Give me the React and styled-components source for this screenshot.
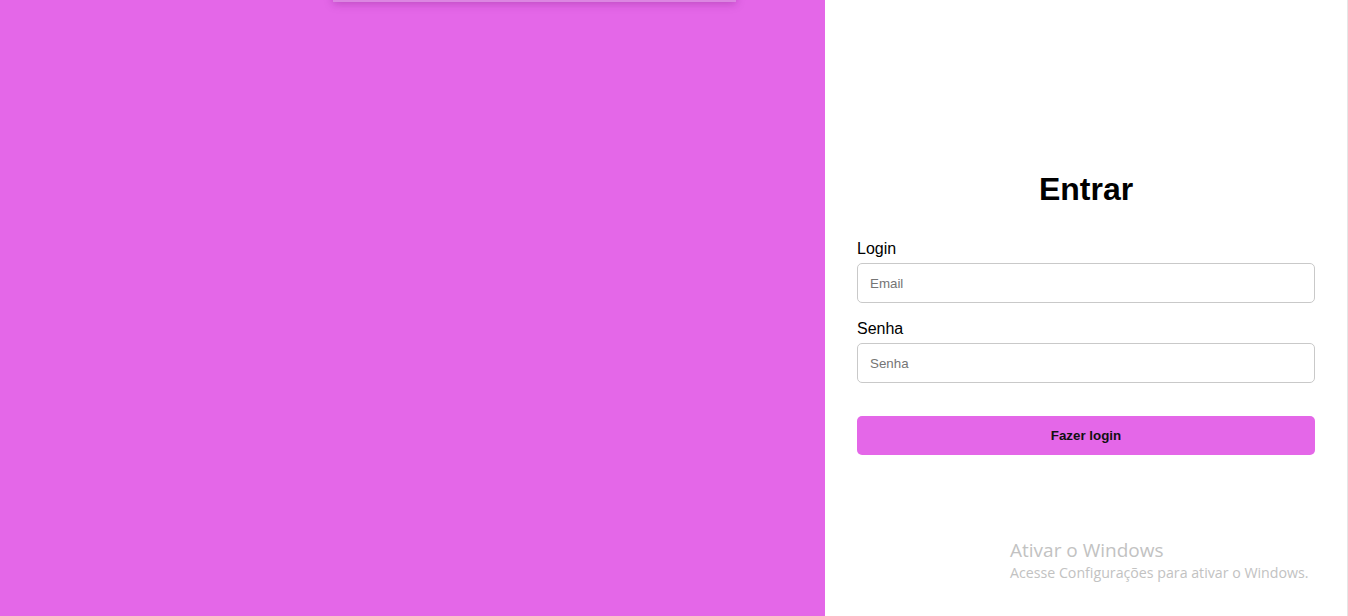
import React from "react";
import styled, { createGlobalStyle } from "styled-components";

const Global = createGlobalStyle`
  html, body { margin: 0; padding: 0; height: 100%; }
  body { font-family: "Liberation Sans", Arial, sans-serif; overflow: hidden; }
  #root { height: 100%; }
  * { box-sizing: border-box; }
`;

const Page = styled.div`
  display: flex;
  width: 100%;
  height: 616px;
  position: relative;
`;

const Hero = styled.section`
  width: 825px;
  flex-shrink: 0;
  background: #e467e8;
  position: relative;
  overflow: hidden;
`;

const FloatingCard = styled.div`
  position: absolute;
  left: 333px;
  top: -300px;
  width: 403px;
  height: 302px;
  background: #dc86e2;
  box-shadow: 0 2px 8px rgba(120, 30, 130, 0.35);
`;

const Side = styled.section`
  flex: 1;
  background: #ffffff;
  border-right: 1px solid #e6e6e6;
  padding: 171px 32px 0;
  display: flex;
  flex-direction: column;
`;

const Title = styled.h1`
  margin: 0 0 31px;
  font-size: 32px;
  font-weight: 700;
  text-align: center;
  color: #000;
  line-height: 37px;
`;

const Field = styled.div`
  display: flex;
  flex-direction: column;
  gap: 4px;
  margin-bottom: ${(p) => p.$mb || 16}px;
`;

const Label = styled.label`
  font-size: 16px;
  line-height: 20px;
  color: #000;
`;

const Input = styled.input`
  height: 40px;
  width: 100%;
  border: 1px solid #c9c9c9;
  border-radius: 5px;
  padding: 0 12px;
  font-family: "Liberation Sans", Arial, sans-serif;
  font-size: 13.333px;
  outline: none;
  &::placeholder { color: #757575; }
`;

const Button = styled.button`
  height: 39px;
  width: 100%;
  border: none;
  border-radius: 5px;
  background: #e467e8;
  color: #111;
  font-family: "Liberation Sans", Arial, sans-serif;
  font-size: 13.333px;
  font-weight: 700;
  cursor: pointer;
`;

const Watermark = styled.div`
  position: absolute;
  left: 1010px;
  top: 538px;
  font-family: "Open Sans", "Noto Sans", sans-serif;
  color: #c2c2c2;
  pointer-events: none;
`;

const WmTitle = styled.div`
  font-size: 19px;
  line-height: 24px;
`;

const WmText = styled.div`
  margin-top: 2px;
  font-size: 14.2px;
  line-height: 18px;
`;

export default function App() {
  return (
    <>
      <Global />
      <Page>
        <Hero>
          <FloatingCard />
        </Hero>
        <Side>
          <Title>Entrar</Title>
          <Field>
            <Label htmlFor="email">Login</Label>
            <Input id="email" type="email" placeholder="Email" />
          </Field>
          <Field $mb={33}>
            <Label htmlFor="senha">Senha</Label>
            <Input id="senha" type="password" placeholder="Senha" />
          </Field>
          <Button>Fazer login</Button>
        </Side>
        <Watermark>
          <WmTitle>Ativar o Windows</WmTitle>
          <WmText>Acesse Configurações para ativar o Windows.</WmText>
        </Watermark>
      </Page>
    </>
  );
}
